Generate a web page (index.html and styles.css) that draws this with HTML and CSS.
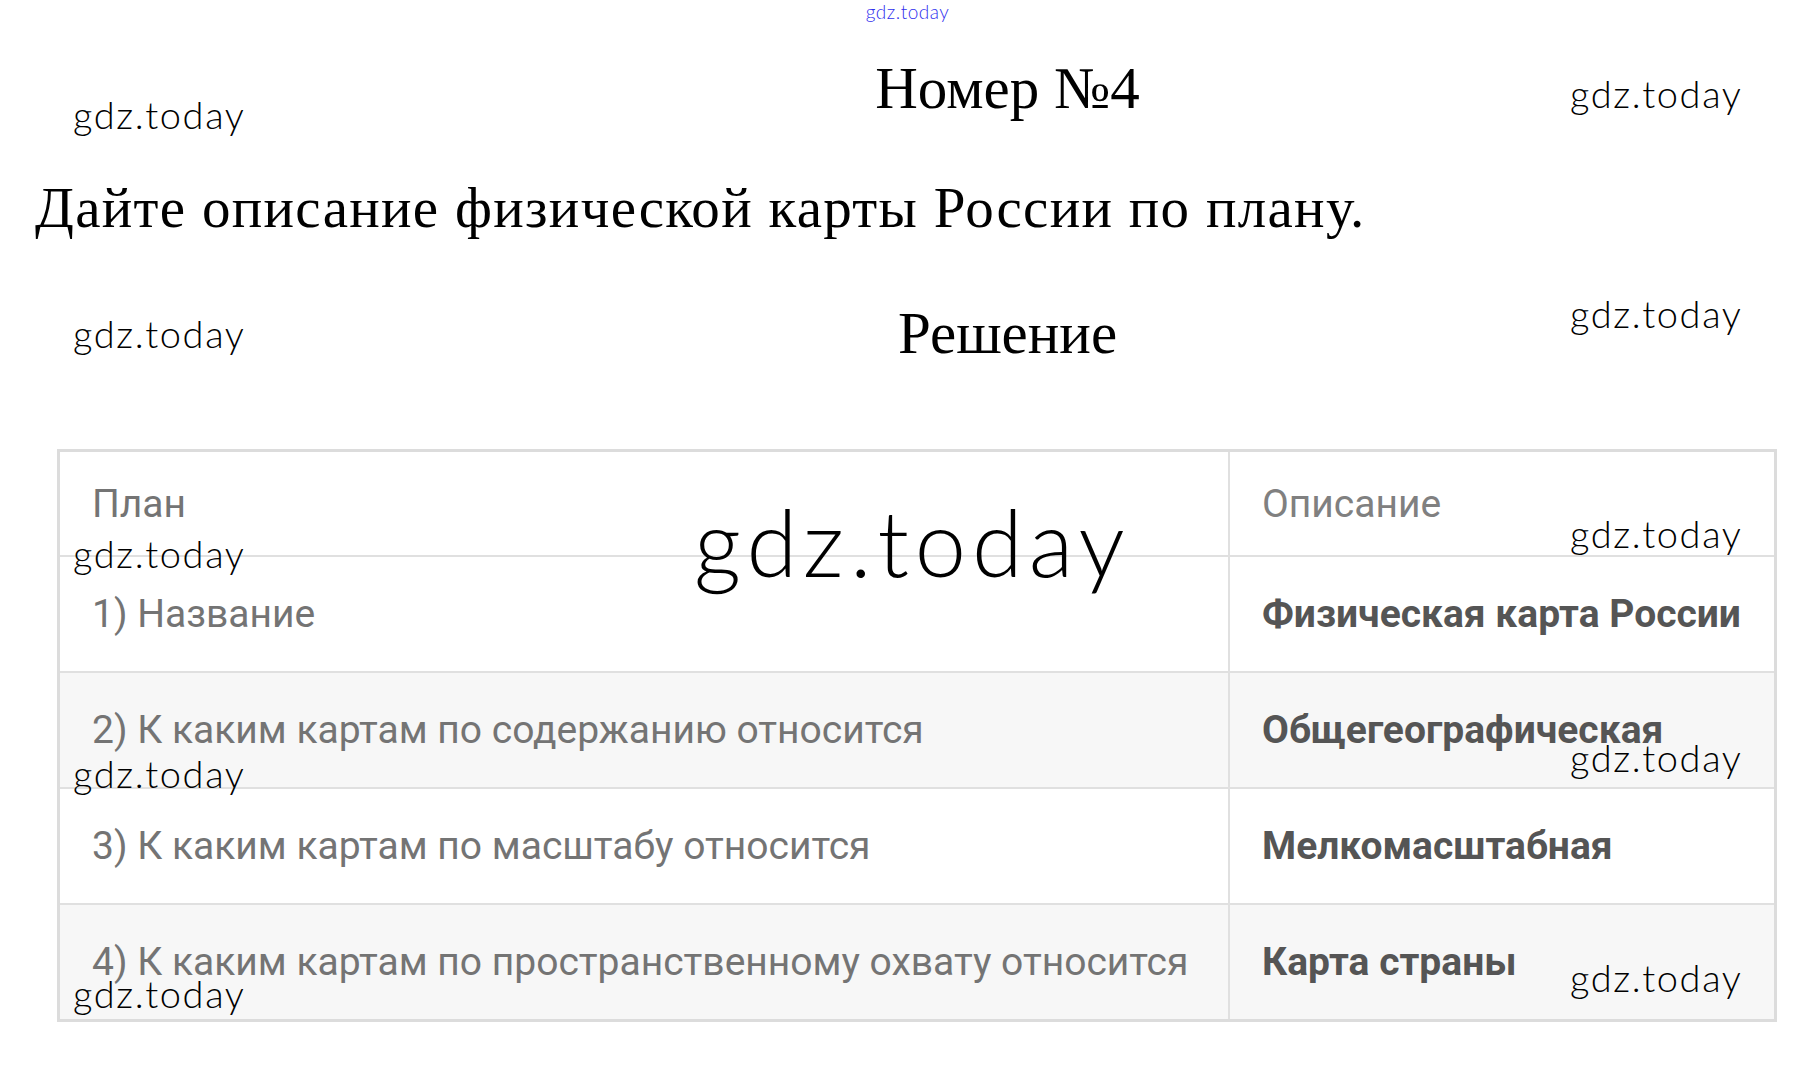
FILE: index.html
```html
<!DOCTYPE html>
<html lang="ru">
<head>
<meta charset="utf-8">
<title>Номер №4</title>
<link rel="stylesheet" href="styles.css">
</head>
<body>
<div class="page">
  <div class="top-link">gdz.today</div>
  <h1 class="title">Номер №4</h1>
  <p class="question">Дайте описание физической карты России по плану.</p>
  <h2 class="solution">Решение</h2>
  <table class="plan">
    <tr class="row-head">
      <td class="c-plan">План</td>
      <td class="c-desc head">Описание</td>
    </tr>
    <tr class="row-a">
      <td class="c-plan">1) Название</td>
      <td class="c-desc">Физическая карта России</td>
    </tr>
    <tr class="row-b">
      <td class="c-plan">2) К каким картам по содержанию относится</td>
      <td class="c-desc">Общегеографическая</td>
    </tr>
    <tr class="row-a">
      <td class="c-plan">3) К каким картам по масштабу относится</td>
      <td class="c-desc">Мелкомасштабная</td>
    </tr>
    <tr class="row-b">
      <td class="c-plan">4) К каким картам по пространственному охвату относится</td>
      <td class="c-desc">Карта страны</td>
    </tr>
  </table>

  <div class="wm wm-l1">gdz.today</div>
  <div class="wm wm-l2">gdz.today</div>
  <div class="wm wm-l3">gdz.today</div>
  <div class="wm wm-l4">gdz.today</div>
  <div class="wm wm-l5">gdz.today</div>
  <div class="wm wm-r1">gdz.today</div>
  <div class="wm wm-r2">gdz.today</div>
  <div class="wm wm-r3">gdz.today</div>
  <div class="wm wm-r4">gdz.today</div>
  <div class="wm wm-r5">gdz.today</div>
  <div class="wm wm-big">gdz.today</div>
</div>
</body>
</html>
```
FILE: styles.css
```css
html, body {
  margin: 0;
  padding: 0;
  background: #ffffff;
}

.page {
  position: relative;
  width: 1815px;
  min-height: 1067px;
}

.top-link {
  height: 24px;
  line-height: 24px;
  text-align: center;
  font-family: "Lato Light", "Lato", "DejaVu Sans", sans-serif;
  font-weight: 300;
  font-size: 19px;
  letter-spacing: 0.5px;
  color: #2f2fee;
}

.title,
.solution {
  margin: 0;
  padding-left: 200px;
  text-align: center;
  font-family: "Liberation Serif", "Times New Roman", serif;
  font-weight: normal;
  font-size: 59px;
  line-height: 68px;
  color: #000;
}

.title {
  margin-top: 30px;
}

.question {
  margin: 54px 0 0 35px;
  font-family: "Liberation Serif", "Times New Roman", serif;
  font-size: 57px;
  line-height: 64px;
  letter-spacing: 1.3px;
  color: #000;
}

.solution {
  margin-top: 59px;
}

.plan {
  margin: 82px 0 0 57px;
  width: 1720px;
  border-collapse: collapse;
  border: 3px solid #dcdcdc;
  font-family: "Roboto", "Liberation Sans", sans-serif;
}

.plan td {
  border: 2px solid #e0e0e0;
  padding: 0 0 0 32px;
  vertical-align: middle;
}

.c-plan {
  width: 1136px;
  font-size: 39px;
  color: #747474;
}

.c-desc {
  font-size: 39px;
  font-weight: bold;
  color: #555555;
}

.c-desc.head {
  font-weight: normal;
  color: #808080;
}

.row-head td { height: 103px; }
.row-a td { height: 114px; }
.row-b td { height: 114px; }

.row-head td,
.row-a td { background: #ffffff; }
.row-b td { background: #f7f7f7; }

.wm {
  position: absolute;
  font-family: "Lato Light", "Lato", "DejaVu Sans", sans-serif;
  font-weight: 300;
  font-size: 38px;
  line-height: 40px;
  letter-spacing: 1.6px;
  color: #000;
  white-space: nowrap;
}

.wm-l1 { left: 73px; top: 94px; }
.wm-l2 { left: 73px; top: 313px; }
.wm-l3 { left: 73px; top: 533px; }
.wm-l4 { left: 73px; top: 753px; }
.wm-l5 { left: 73px; top: 973px; }

.wm-r1 { left: 1570px; top: 73px; }
.wm-r2 { left: 1570px; top: 293px; }
.wm-r3 { left: 1570px; top: 513px; }
.wm-r4 { left: 1570px; top: 737px; }
.wm-r5 { left: 1570px; top: 957px; }

.wm-big {
  left: 694px;
  top: 490px;
  font-size: 92px;
  line-height: 104px;
  letter-spacing: 6px;
}
```
